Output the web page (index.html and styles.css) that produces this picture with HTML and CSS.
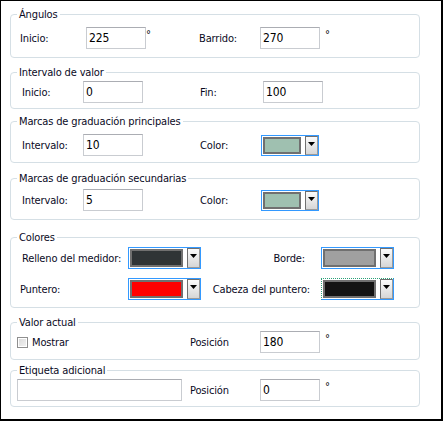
FILE: index.html
```html
<!DOCTYPE html>
<html lang="es">
<head>
<meta charset="utf-8">
<title>Propiedades del medidor</title>
<link rel="stylesheet" href="styles.css">
</head>
<body>
<div class="window">
  <section class="group g1">
    <div class="legend">Ángulos</div>
    <div class="row p9 mt12">
      <span class="lbl w66">Inicio:</span>
      <span class="field">225</span>
      <span class="deg w53">°</span>
      <span class="lbl w61">Barrido:</span>
      <span class="field">270</span>
      <span class="deg ml5">°</span>
    </div>
  </section>

  <section class="group g2">
    <div class="legend">Intervalo de valor</div>
    <div class="row p11 mt8">
      <span class="lbl w61">Inicio:</span>
      <span class="field">0</span>
      <span class="lbl w63 ml57">Fin:</span>
      <span class="field">100</span>
    </div>
  </section>

  <section class="group g3">
    <div class="legend">Marcas de graduación principales</div>
    <div class="row p11 mt12">
      <span class="lbl w61">Intervalo:</span>
      <span class="field">10</span>
      <span class="lbl w61 ml57">Color:</span>
      <span class="combo"><span class="swatch sw-green"></span><span class="btn"><svg width="7" height="4" viewBox="0 0 7 4"><polygon points="0,0 7,0 3.5,4" fill="#000"/></svg></span></span>
    </div>
  </section>

  <section class="group g4">
    <div class="legend">Marcas de graduación secundarias</div>
    <div class="row p11 mt10">
      <span class="lbl w61">Intervalo:</span>
      <span class="field">5</span>
      <span class="lbl w61 ml57">Color:</span>
      <span class="combo"><span class="swatch sw-green"></span><span class="btn"><svg width="7" height="4" viewBox="0 0 7 4"><polygon points="0,0 7,0 3.5,4" fill="#000"/></svg></span></span>
    </div>
  </section>

  <section class="group g5">
    <div class="legend">Colores</div>
    <div class="row p11 mt9">
      <span class="lbl w106">Relleno del medidor:</span>
      <span class="combo big"><span class="swatch sw-dark"></span><span class="btn"><svg width="7" height="4" viewBox="0 0 7 4"><polygon points="0,0 7,0 3.5,4" fill="#000"/></svg></span></span>
      <span class="lbl rlbl pr16">Borde:</span>
      <span class="combo big"><span class="swatch sw-gray"></span><span class="btn"><svg width="7" height="4" viewBox="0 0 7 4"><polygon points="0,0 7,0 3.5,4" fill="#000"/></svg></span></span>
    </div>
    <div class="row p9 mt9">
      <span class="lbl w108">Puntero:</span>
      <span class="combo big"><span class="swatch sw-red"></span><span class="btn"><svg width="7" height="4" viewBox="0 0 7 4"><polygon points="0,0 7,0 3.5,4" fill="#000"/></svg></span></span>
      <span class="lbl rlbl pr11">Cabeza del puntero:</span>
      <span class="combo big focus"><span class="swatch sw-black"></span><span class="btn"><svg width="7" height="4" viewBox="0 0 7 4"><polygon points="0,0 7,0 3.5,4" fill="#000"/></svg></span></span>
    </div>
  </section>

  <section class="group g6">
    <div class="legend">Valor actual</div>
    <div class="row p6 mt8">
      <span class="check"></span>
      <span class="lbl w158 ml4">Mostrar</span>
      <span class="lbl w70">Posición</span>
      <span class="field">180</span>
      <span class="deg ml5">°</span>
    </div>
  </section>

  <section class="group g7">
    <div class="legend">Etiqueta adicional</div>
    <div class="row p6 mt8">
      <span class="field wide"></span>
      <span class="lbl w70 ml8">Posición</span>
      <span class="field">0</span>
      <span class="deg ml5">°</span>
    </div>
  </section>
</div>
</body>
</html>
```

FILE: styles.css
```css
* { box-sizing: border-box; }

html, body {
  margin: 0;
  padding: 0;
  background: #fff;
}

body {
  font-family: "DejaVu Sans Condensed", "Liberation Sans", sans-serif;
  font-size: 11px;
  letter-spacing: -0.15px;
  color: #000;
}

.window {
  width: 443px;
  height: 421px;
  border-style: solid;
  border-color: #000;
  border-width: 1px 2px 2px 1px;
  background: #fff;
  padding: 0 21px 0 9px;
  display: flex;
  flex-direction: column;
}

.group {
  border: 1px solid #d5dfe5;
  border-radius: 4px;
  width: 410px;
  padding: 0;
}

.legend {
  width: max-content;
  height: 15px;
  line-height: 15px;
  margin: -8px 0 -7px 6px;
  padding: 0 2px;
  background: #fff;
  color: #0a0a1e;
}

.g1 { margin-top: 13px; padding-bottom: 8px; }
.g2 { margin-top: 14px; padding-bottom: 5px; }
.g3 { margin-top: 12px; padding-bottom: 6px; }
.g4 { margin-top: 15px; padding-bottom: 8px; }
.g5 { margin-top: 17px; padding-bottom: 7px; }
.g6 { margin-top: 14px; padding-bottom: 6px; }
.g7 { margin-top: 10px; padding-bottom: 5px; }

.row {
  display: flex;
  align-items: center;
  height: 22px;
}

.mt8 { margin-top: 8px; }
.mt9 { margin-top: 9px; }
.mt10 { margin-top: 10px; }
.mt12 { margin-top: 12px; }

.p6 { padding-left: 6px; }
.p9 { padding-left: 9px; }
.p11 { padding-left: 11px; }

.lbl {
  line-height: 15px;
  white-space: nowrap;
  flex: none;
  color: #0a0a1e;
}

.w53 { width: 53px; }
.w61 { width: 61px; }
.w63 { width: 63px; }
.w66 { width: 66px; }
.w70 { width: 70px; }
.w106 { width: 106px; }
.w108 { width: 108px; }
.w158 { width: 158px; }
.ml4 { margin-left: 4px; }
.ml5 { margin-left: 5px; }
.ml8 { margin-left: 8px; }
.ml57 { margin-left: 57px; }

.rlbl {
  width: 120px;
  text-align: right;
}
.pr16 { padding-right: 16px; }
.pr11 { padding-right: 11px; }

.field {
  flex: none;
  width: 60px;
  height: 22px;
  border: 1px solid #c9ccd1;
  border-top-color: #abadb3;
  background: #fff;
  padding: 3px 2px 0;
  line-height: 15px;
  font-size: 12px;
}

.field.wide { width: 165px; }

.deg {
  flex: none;
  align-self: flex-start;
  line-height: 15px;
  margin-top: 0;
  font-size: 11px;
}

.combo {
  flex: none;
  display: flex;
  width: 58px;
  height: 21px;
  border: 1px solid #3399ff;
  background: #fff;
}

.combo.big { width: 73px; height: 22px; }

.combo.focus {
  border-style: dotted solid solid dotted;
  border-color: #2aa178 #3399ff #3399ff #2aa178;
}

.swatch {
  margin: 1px 0 1px 1px;
  width: 38px;
  border: 2px solid #707070;
}

.combo.big .swatch { width: 53px; }

.sw-green { background: #9fc0b0; }
.sw-dark { background: #2f3436; }
.sw-gray { background: #a0a0a0; }
.sw-red { background: #ff0000; }
.sw-black { background: #141414; }

.btn {
  margin-left: auto;
  width: 13px;
  border: 1px solid #707070;
  border-right-color: #9a9a9a;
  border-bottom-color: #9a9a9a;
  background: linear-gradient(#fbfbfb, #d6d6d6);
  display: flex;
  justify-content: center;
  padding-top: 5px;
}

.btn svg { display: block; }

.check {
  flex: none;
  width: 11px;
  height: 11px;
  border: 1px solid #8f8f8f;
  background: linear-gradient(135deg, #d8d8d8, #f4f4f4);
  box-shadow: inset 0 0 0 1px #fff;
}
```
